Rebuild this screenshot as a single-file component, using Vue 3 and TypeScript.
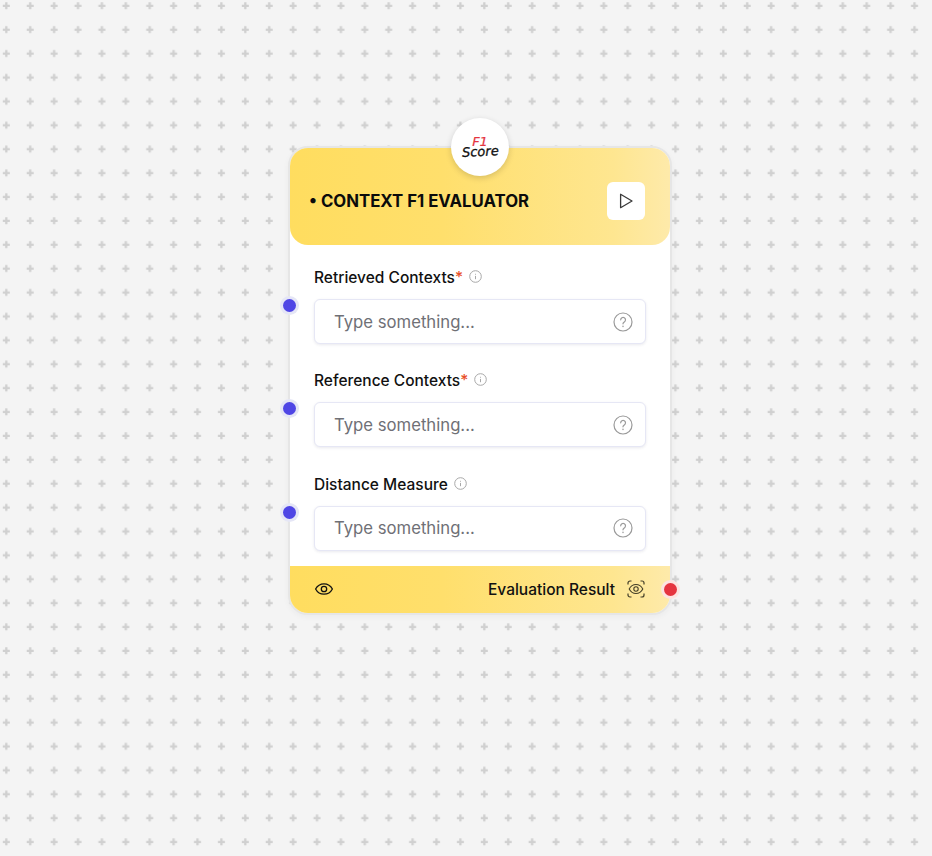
<script setup lang="ts">
const fields = [
  { label: 'Retrieved Contexts', required: true },
  { label: 'Reference Contexts', required: true },
  { label: 'Distance Measure', required: false },
]
</script>

<template>
  <div class="canvas">
    <svg class="dots" width="932" height="856" aria-hidden="true">
      <defs>
        <pattern id="plus" x="0" y="0" width="23.9" height="23.89" patternUnits="userSpaceOnUse">
          <path d="M6.300 2.300v7M2.800 5.800h7" stroke="#d0d0d0" stroke-width="2.300" fill="none" />
        </pattern>
      </defs>
      <rect width="932" height="856" fill="url(#plus)" />
    </svg>

    <div class="node">
      <div class="logo">
        <span class="logo-f1">F1</span>
        <span class="logo-score">Score</span>
      </div>
      <header class="head">
        <h1 class="title">• CONTEXT F1 EVALUATOR</h1>
        <button class="run" type="button" aria-label="Run">
          <svg width="18" height="18" viewBox="0 0 18 18" fill="none">
            <path d="M3.600 2.300v13.400L15 9z" stroke="#3a3a3a" stroke-width="1.300" stroke-linejoin="round" />
          </svg>
        </button>
      </header>
      <div class="body">
        <div v-for="f in fields" :key="f.label" class="field">
          <span class="port"></span>
          <div class="label">
            <span class="label-text">{{ f.label }}<i v-if="f.required" class="req">*</i></span>
            <svg class="info" width="13" height="13" viewBox="0 0 13 13" fill="none">
              <circle cx="6.500" cy="6.500" r="5.800" stroke="#a8a8a8" />
              <path d="M6.500 5.900v3.300M6.500 3.800v.9" stroke="#a8a8a8" />
            </svg>
          </div>
          <div class="input">
            <span class="placeholder">Type something...</span>
            <svg width="20" height="20" viewBox="0 0 20 20" fill="none">
              <circle cx="10" cy="10" r="9" stroke="#9a9a9a" stroke-width="1.200" />
              <path d="M7.700 7.800a2.400 2.400 0 1 1 3.600 2.100c-.8.500-1.300 1-1.300 1.900" stroke="#9a9a9a" stroke-width="1.200" stroke-linecap="round" />
              <path d="M10 14.200v.3" stroke="#9a9a9a" stroke-width="1.400" stroke-linecap="round" />
            </svg>
          </div>
        </div>
      </div>
      <footer class="foot">
        <svg width="20" height="20" viewBox="0 0 20 20" fill="none">
          <path d="M1.600 10C3.400 6.600 6.400 4.800 10 4.800s6.600 1.800 8.400 5.200c-1.800 3.400-4.800 5.200-8.400 5.200S3.400 13.400 1.600 10z" stroke="#111" stroke-width="1.300" stroke-linejoin="round" />
          <circle cx="10" cy="10" r="2.700" stroke="#111" stroke-width="1.300" />
        </svg>
        <div class="result">
          <span>Evaluation Result</span>
          <svg width="18" height="18" viewBox="0 0 18 18" fill="none">
            <path d="M1 4.500V3a2 2 0 0 1 2-2h1.500M13.500 1H15a2 2 0 0 1 2 2v1.500M17 13.500V15a2 2 0 0 1-2 2h-1.500M4.500 17H3a2 2 0 0 1-2-2v-1.500" stroke="#443f28" stroke-width="1.200" />
            <path d="M2.200 9C3.700 6.100 6 4.500 9 4.500s5.300 1.600 6.800 4.500c-1.500 2.900-3.800 4.500-6.800 4.500S3.700 11.900 2.200 9z" stroke="#443f28" stroke-width="1.100" />
            <circle cx="9" cy="9" r="2.200" stroke="#443f28" stroke-width="1.100" />
          </svg>
        </div>
        <span class="out"></span>
      </footer>
    </div>
  </div>
</template>

<style>
html, body { margin: 0; background: #f4f4f4; }
</style>

<style scoped>
.canvas {
  position: relative;
  width: 932px;
  height: 856px;
  overflow: hidden;
  background: #f4f4f4;
  font-family: Inter, "Liberation Sans", sans-serif;
  display: flex;
  justify-content: flex-start;
  align-items: flex-start;
  padding: 146px 0 0 288px;
  box-sizing: border-box;
}
.dots { position: absolute; left: 0; top: 0; }
.node {
  position: relative;
  width: 384px;
  box-sizing: border-box;
  background: #fff;
  border: 2px solid #e6e6e6;
  border-radius: 20px;
  box-shadow: 0 2px 6px rgba(0, 0, 0, 0.04);
}
.logo {
  position: absolute;
  left: 161px;
  top: -30px;
  width: 58px;
  height: 58px;
  border-radius: 50%;
  background: #fff;
  box-shadow: 0 2px 6px rgba(0, 0, 0, 0.16);
  z-index: 2;
  display: flex;
  flex-direction: column;
  align-items: center;
  justify-content: center;
  font-family: "DejaVu Sans", sans-serif;
  font-style: italic;
  line-height: 10px;
}
.logo-f1 { color: #e5343f; font-size: 13px; font-weight: 400; -webkit-text-stroke: 0.2px #e5343f; }
.logo-score { color: #111; font-size: 13px; font-weight: 400; -webkit-text-stroke: 0.3px #111; transform: rotate(-3deg); }
.head {
  height: 97px;
  border-radius: 18px;
  background: linear-gradient(90deg, #ffdd5f 0%, #ffdf6c 40%, #fee690 85%, #feeaaa 100%);
  display: flex;
  align-items: center;
  justify-content: space-between;
  padding: 8px 25px 0 19px;
  box-sizing: border-box;
}
.title { margin: 0; font-size: 16.750px; font-weight: 700; color: #0b0b0b; }
.run {
  width: 38px;
  height: 38px;
  padding: 0;
  border: 0;
  border-radius: 6px;
  background: #fff;
  display: flex;
  align-items: center;
  justify-content: center;
}
.body { padding: 22px 24px 15.400px; display: flex; flex-direction: column; gap: 26.300px; }
.field { position: relative; }
.label { display: flex; align-items: flex-start; gap: 6px; height: 22px; margin-bottom: 10px; }
.label-text { font-size: 15.500px; font-weight: 500; color: #111; line-height: 22px; }
.req { color: #e8502a; font-style: normal; }
.info { margin-top: 3px; }
.input {
  height: 45px;
  box-sizing: border-box;
  border: 1px solid #e6e7f5;
  border-radius: 6px;
  box-shadow: 0 1px 3px rgba(40, 40, 90, 0.1);
  display: flex;
  align-items: center;
  justify-content: space-between;
  padding: 0 12px 0 19px;
  background: #fff;
}
.placeholder { font-size: 16.700px; color: #6f7076; }
.port {
  position: absolute;
  left: -31px;
  top: 32px;
  width: 13px;
  height: 13px;
  border-radius: 50%;
  background: #4f46e5;
  box-shadow: 0 0 0 3px #e5e6f6;
}
.foot {
  position: relative;
  height: 47px;
  border-radius: 0 0 18px 18px;
  background: linear-gradient(90deg, #ffdd5f 0%, #ffdf6c 40%, #fee690 85%, #feeaaa 100%);
  display: flex;
  align-items: center;
  justify-content: space-between;
  padding: 0 25px 0 24px;
}
.result { display: flex; align-items: center; gap: 12px; font-size: 15.500px; font-weight: 500; color: #111; }
.out {
  position: absolute;
  right: -7px;
  top: 17px;
  width: 13px;
  height: 13px;
  border-radius: 50%;
  background: #e5343f;
  box-shadow: 0 0 0 3px #fde3e1;
}
</style>
